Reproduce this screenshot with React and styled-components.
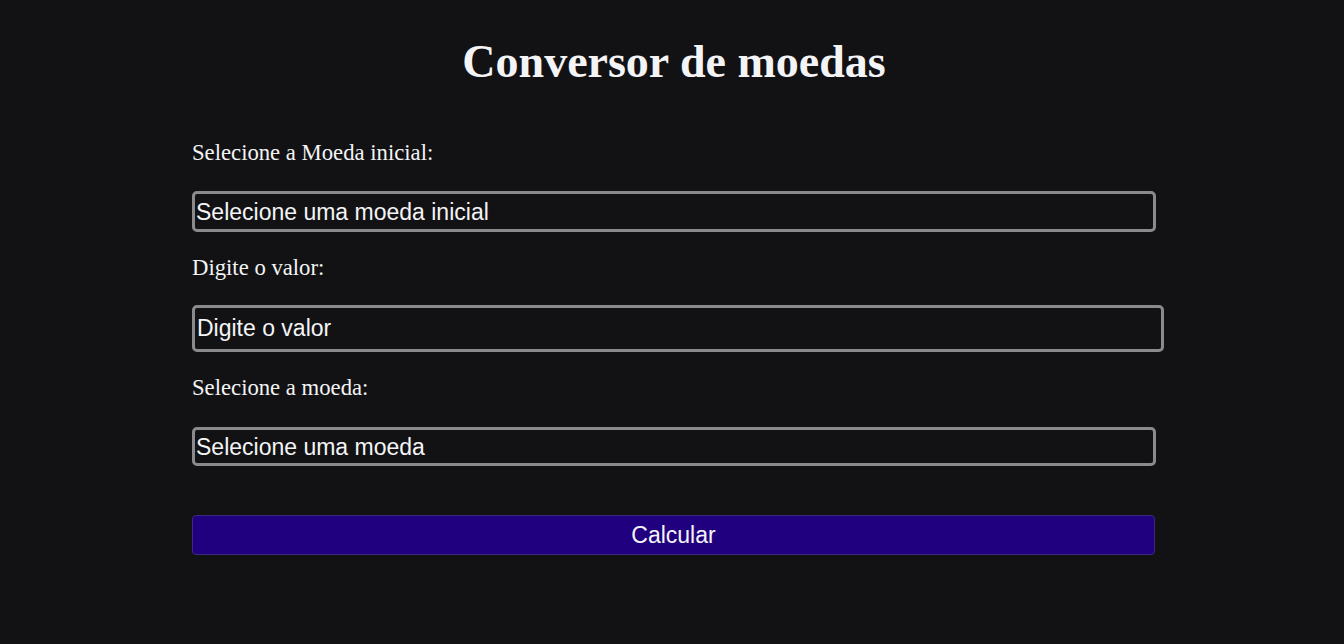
import React from "react";
import styled, { createGlobalStyle } from "styled-components";

const GlobalStyle = createGlobalStyle`
  html, body {
    margin: 0;
    padding: 0;
    background: #121214;
    color: #f4f4f6;
  }
`;

const Page = styled.div`
  min-height: 644px;
  padding: 0 188px 0 192px;
  box-sizing: border-box;
  font-family: "Liberation Serif", "Times New Roman", serif;
`;

const Title = styled.h1`
  margin: 0;
  padding-top: 34px;
  text-align: center;
  font-size: 46px;
  line-height: 55px;
  font-weight: bold;
  color: #f4f4f6;
`;

const Form = styled.form`
  display: flex;
  flex-direction: column;
  align-items: flex-start;
  margin-top: 51px;
`;

const Label = styled.label`
  font-size: 22.7px;
  line-height: 26px;
  color: #f4f4f6;
  margin-bottom: ${(p) => p.$gap || 25}px;
`;

const fieldText = `
  box-sizing: border-box;
  background: #121214;
  color: #f4f4f6;
  border: 3px solid #8a8a8c;
  border-radius: 5px;
  font-family: "Liberation Sans", Arial, sans-serif;
  font-size: 23px;
  outline: none;
`;

const Select = styled.select`
  ${fieldText}
  appearance: none;
  -webkit-appearance: none;
  width: 964px;
  height: ${(p) => p.$h || 41}px;
  margin-bottom: ${(p) => p.$mb || 23}px;
  padding: 0 1px;
`;

const Input = styled.input`
  ${fieldText}
  width: 972px;
  height: 47px;
  margin-bottom: 23px;
  padding: 0 2px;

  &::placeholder {
    color: #f4f4f6;
    opacity: 1;
  }
`;

const Button = styled.button`
  box-sizing: border-box;
  width: 963px;
  height: 40px;
  background: #21007f;
  color: #f4f4f6;
  border: 1px solid #3a2a80;
  border-radius: 4px;
  font-family: "Liberation Sans", Arial, sans-serif;
  font-size: 23px;
  cursor: pointer;
`;

const App = () => {
  return (
    <Page>
      <GlobalStyle />
      <Title>Conversor de moedas</Title>
      <Form onSubmit={(e) => e.preventDefault()}>
        <Label htmlFor="inicial">Selecione a Moeda inicial:</Label>
        <Select id="inicial" defaultValue="">
          <option value="">Selecione uma moeda inicial</option>
        </Select>
        <Label htmlFor="valor" $gap={24}>Digite o valor:</Label>
        <Input id="valor" type="text" placeholder="Digite o valor" />
        <Label htmlFor="moeda" $gap={26}>Selecione a moeda:</Label>
        <Select id="moeda" defaultValue="" $h={39} $mb={49}>
          <option value="">Selecione uma moeda</option>
        </Select>
        <Button type="submit">Calcular</Button>
      </Form>
    </Page>
  );
};

export default App;
